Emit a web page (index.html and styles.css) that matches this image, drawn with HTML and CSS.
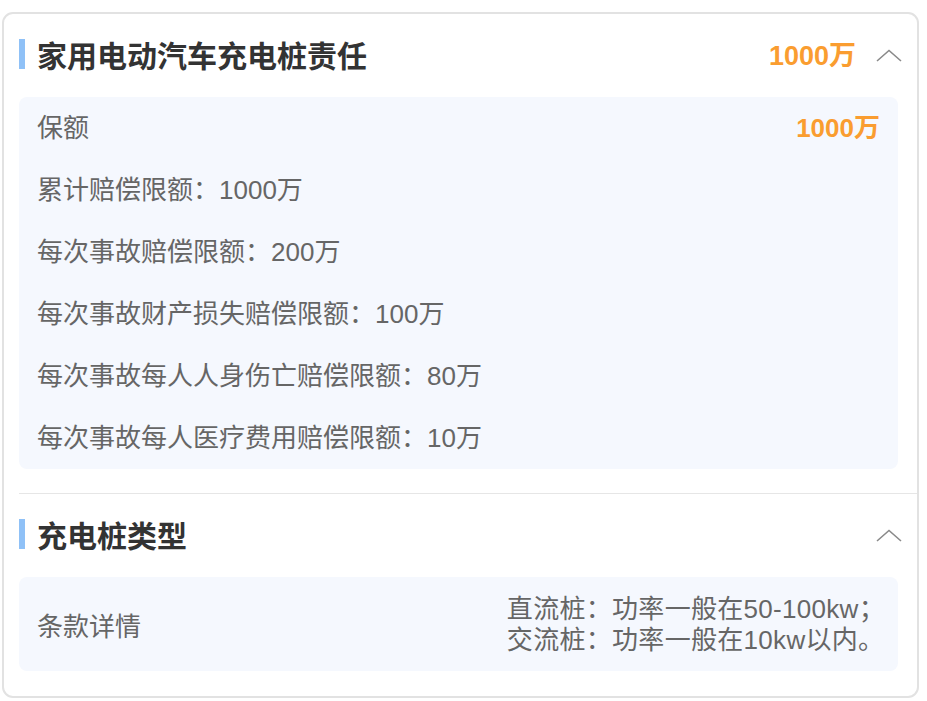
FILE: index.html
```html
<!DOCTYPE html>
<html lang="zh-CN">
<head>
<meta charset="utf-8">
<link rel="stylesheet" href="styles.css">
</head>
<body>
<div class="page">
  <div class="card">
    <section class="section">
      <div class="header">
        <span class="bar"></span>
        <h2 class="title">家用电动汽车充电桩责任</h2>
        <span class="head-value">1000万</span>
        <svg class="chev" width="26" height="13" viewBox="0 0 26 13"><path d="M1 12 L13 1.5 L25 12" fill="none" stroke="#8a8a8a" stroke-width="1.6"/></svg>
      </div>
      <div class="panel">
        <div class="row"><span>保额</span><span class="val">1000万</span></div>
        <div class="row"><span>累计赔偿限额：1000万</span></div>
        <div class="row"><span>每次事故赔偿限额：200万</span></div>
        <div class="row"><span>每次事故财产损失赔偿限额：100万</span></div>
        <div class="row"><span>每次事故每人人身伤亡赔偿限额：80万</span></div>
        <div class="row"><span>每次事故每人医疗费用赔偿限额：10万</span></div>
      </div>
    </section>
    <div class="divider"></div>
    <section class="section">
      <div class="header">
        <span class="bar"></span>
        <h2 class="title">充电桩类型</h2>
        <svg class="chev" width="26" height="13" viewBox="0 0 26 13"><path d="M1 12 L13 1.5 L25 12" fill="none" stroke="#8a8a8a" stroke-width="1.6"/></svg>
      </div>
      <div class="panel panel-terms">
        <span>条款详情</span>
        <div class="terms">
          <div>直流桩：功率一般在50-100kw；</div>
          <div>交流桩：功率一般在10kw以内。</div>
        </div>
      </div>
    </section>
  </div>
</div>
</body>
</html>
```

FILE: styles.css
```css
* { box-sizing: border-box; }
html, body { margin: 0; padding: 0; background: #fff; }
body {
  font-family: "Liberation Sans", "Noto Sans CJK SC", sans-serif;
  color: #666;
}
.page { padding: 12px 0 0 2px; }
.card {
  width: 917px;
  height: 686px;
  border: 2px solid #e2e2e2;
  border-radius: 11px;
  padding: 0 0 0 15px;
}
.header {
  height: 83px;
  display: flex;
  align-items: center;
  padding-right: 15px;
  padding-bottom: 4px;
}
.bar {
  width: 6px;
  height: 30px;
  background: #8fc1f7;
  margin-right: 12px;
  flex: none;
}
.title {
  margin: 0;
  font-size: 30px;
  font-weight: bold;
  color: #333;
  flex: 1;
}
.head-value {
  font-size: 27px;
  font-weight: bold;
  color: #fa9d30;
  margin-right: 20px;
}
.chev { display: block; flex: none; margin-top: 3px; }
.panel {
  margin-right: 19px;
  background: #f5f8fe;
  border-radius: 8px;
  padding: 0 18px;
  font-size: 26px;
}
.row {
  height: 62px;
  display: flex;
  align-items: center;
  justify-content: space-between;
  padding-bottom: 6px;
}
.val {
  color: #fa9d30;
  font-weight: bold;
  font-size: 26px;
}
.divider {
  height: 1px;
  background: #e6e6e6;
  margin-top: 24px;
}
.panel-terms {
  height: 94px;
  display: flex;
  align-items: center;
  justify-content: space-between;
}
.terms {
  font-size: 26px;
  line-height: 31px;
  letter-spacing: 0.3px;
  padding-top: 2px;
  margin-right: -5px;
}
```
